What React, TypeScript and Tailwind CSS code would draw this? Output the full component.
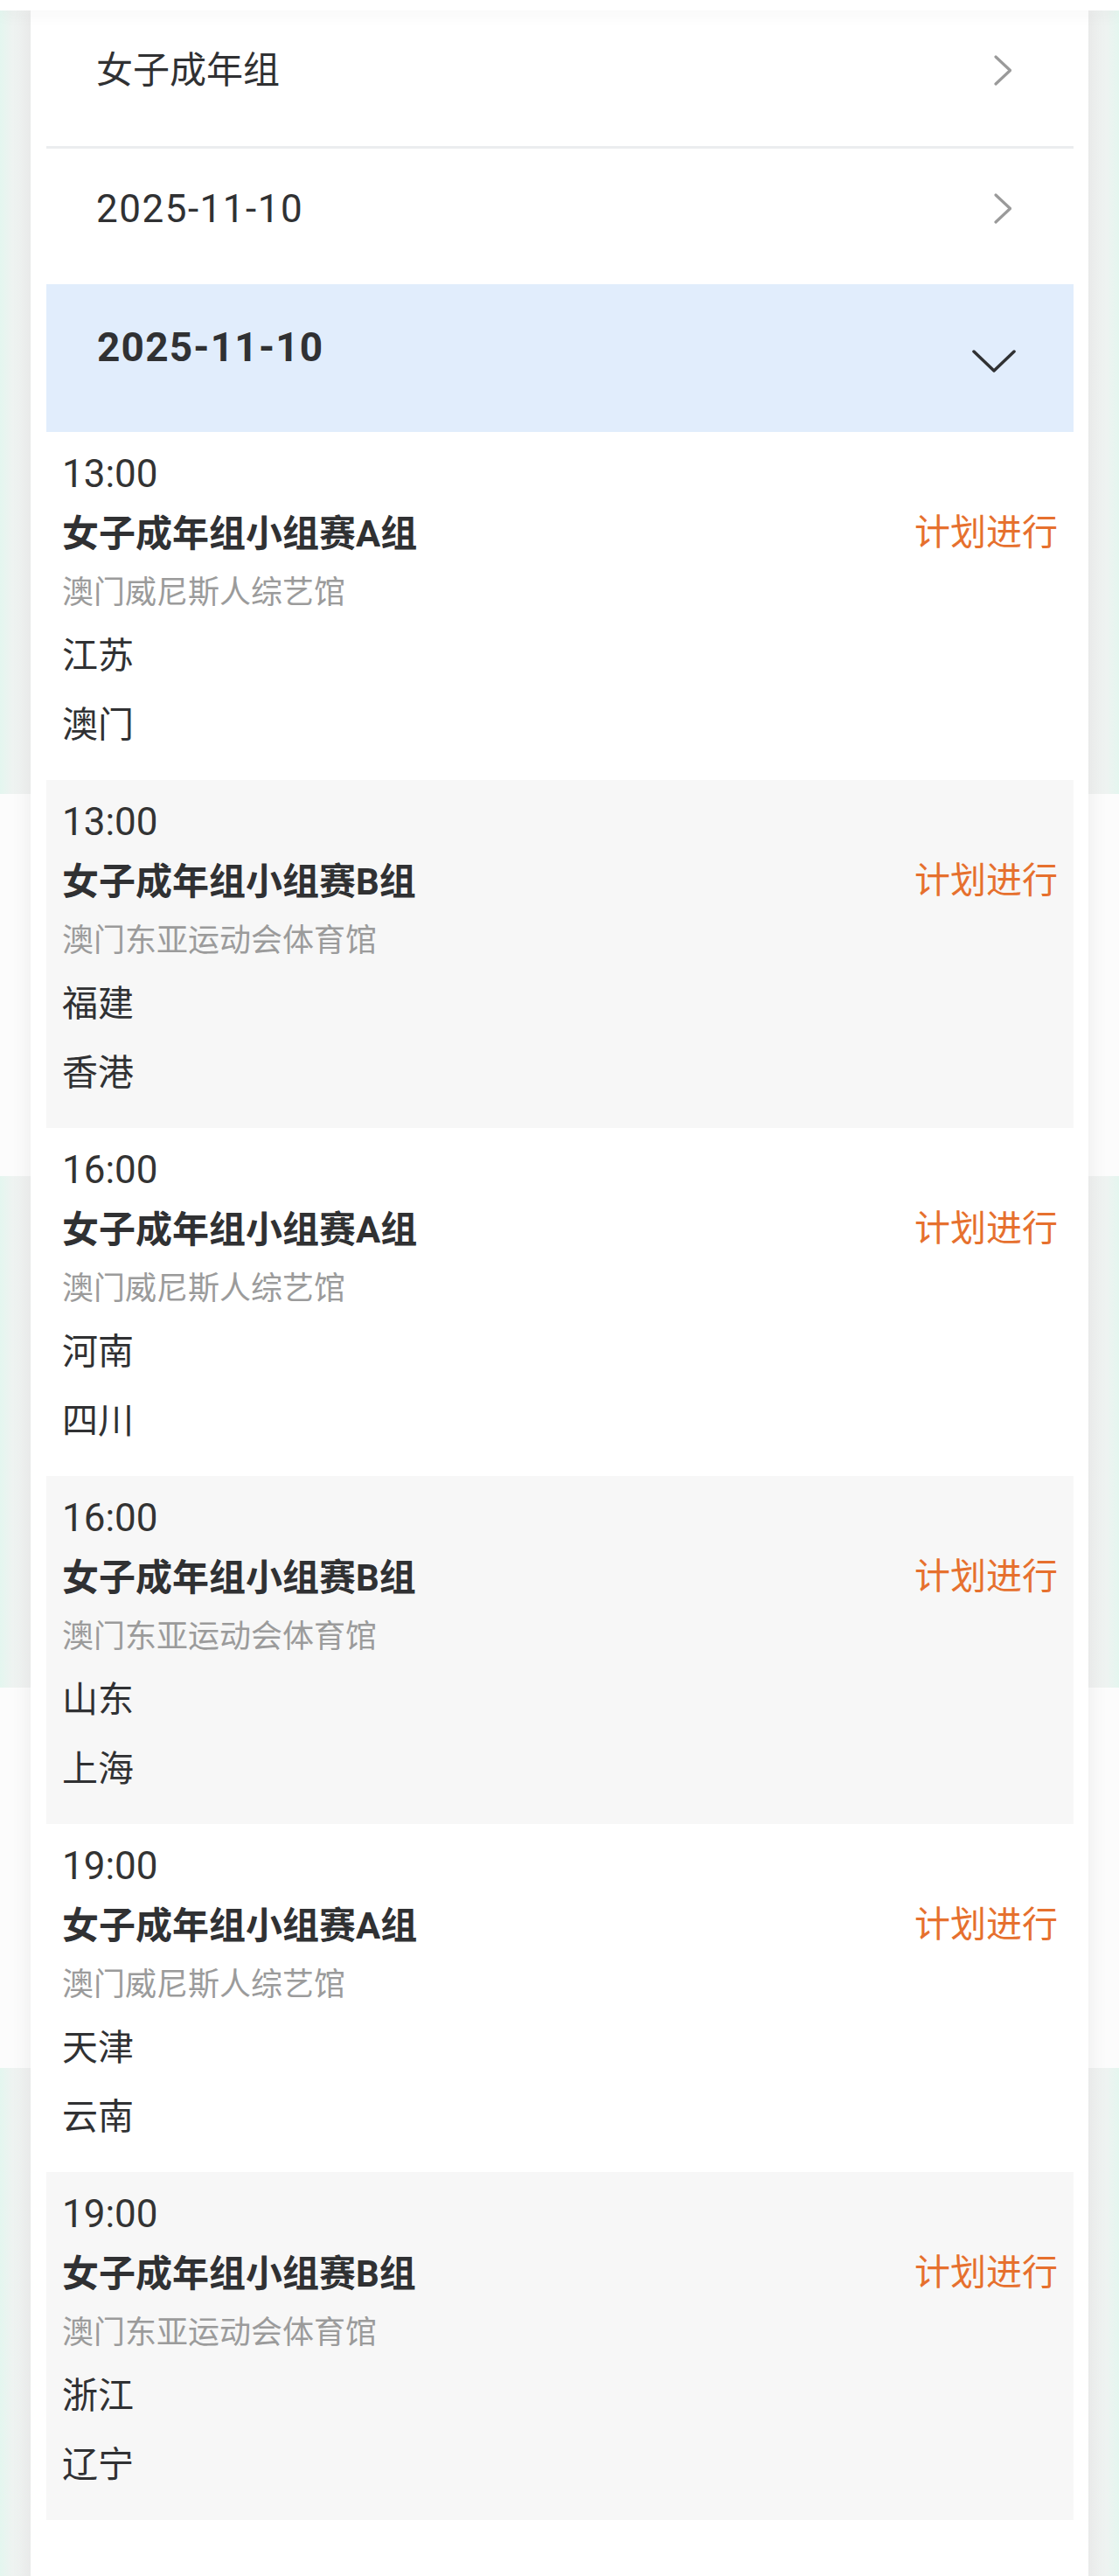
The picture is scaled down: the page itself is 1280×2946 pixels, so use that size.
import React from 'react'

interface Match {
  time: string
  title: string
  venue: string
  home: string
  away: string
  status: string
}

const matches: Match[] = [
  { time: '13:00', title: '女子成年组小组赛A组', venue: '澳门威尼斯人综艺馆', home: '江苏', away: '澳门', status: '计划进行' },
  { time: '13:00', title: '女子成年组小组赛B组', venue: '澳门东亚运动会体育馆', home: '福建', away: '香港', status: '计划进行' },
  { time: '16:00', title: '女子成年组小组赛A组', venue: '澳门威尼斯人综艺馆', home: '河南', away: '四川', status: '计划进行' },
  { time: '16:00', title: '女子成年组小组赛B组', venue: '澳门东亚运动会体育馆', home: '山东', away: '上海', status: '计划进行' },
  { time: '19:00', title: '女子成年组小组赛A组', venue: '澳门威尼斯人综艺馆', home: '天津', away: '云南', status: '计划进行' },
  { time: '19:00', title: '女子成年组小组赛B组', venue: '澳门东亚运动会体育馆', home: '浙江', away: '辽宁', status: '计划进行' },
]

function ChevronRight() {
  return (
    <svg width="20" height="35" viewBox="0 0 20 35" fill="none" className="shrink-0">
      <polyline points="2,2 18.5,17.5 2,33" stroke="#9a9a9a" strokeWidth="3.2" strokeLinecap="round" strokeLinejoin="round" />
    </svg>
  )
}

function ChevronDown() {
  return (
    <svg width="50" height="26" viewBox="0 0 50 26" fill="none" className="shrink-0">
      <polyline points="2,2 25,24 48,2" stroke="#303133" strokeWidth="3.5" strokeLinecap="round" strokeLinejoin="round" />
    </svg>
  )
}

function MatchRow({ m, odd }: { m: Match; odd: boolean }) {
  return (
    <div className={`h-[398px] pl-[18px] pr-[18px] pt-[16px] ${odd ? 'bg-[#f7f7f7]' : 'bg-white'}`}>
      <div className="text-[44px] leading-[64px] text-[#333]">{m.time}</div>
      <div className="flex h-[72px] items-center justify-between">
        <span className="text-[42px] font-bold text-[#303133]">{m.title}</span>
        <span className="text-[41px] text-[#e6702e]">{m.status}</span>
      </div>
      <div className="text-[36px] leading-[64px] text-[#9b9b9b]">{m.venue}</div>
      <div className="text-[41px] leading-[80px] text-[#303133]">{m.home}</div>
      <div className="text-[41px] leading-[78px] text-[#303133]">{m.away}</div>
    </div>
  )
}

export default function App() {
  return (
    <div className="relative h-[2946px] overflow-hidden bg-white font-['Roboto','Noto_Sans_CJK_SC',sans-serif]">
      {/* page behind the sheet */}
      <div className="absolute inset-0 flex flex-col">
        <div className="h-[908px] bg-[linear-gradient(to_right,#e4f6ef_0px,#eef3f1_14px,#f2f2f2_40px,#f2f2f2_calc(100%-40px),#eef3f1_calc(100%-14px),#e4f6ef_100%)]" />
        <div className="h-[437px] bg-[#fcfcfc]" />
        <div className="h-[585px] bg-[linear-gradient(to_right,#e4f6ef_0px,#eef3f1_14px,#f2f2f2_40px,#f2f2f2_calc(100%-40px),#eef3f1_calc(100%-14px),#e4f6ef_100%)]" />
        <div className="h-[435px] bg-[#fcfcfc]" />
        <div className="flex-1 bg-[linear-gradient(to_right,#e4f6ef_0px,#eef3f1_14px,#f2f2f2_40px,#f2f2f2_calc(100%-40px),#eef3f1_calc(100%-14px),#e4f6ef_100%)]" />
      </div>

      <div className="relative flex h-full flex-col">
        <div className="relative z-10 h-[12px] shrink-0 bg-white shadow-[0_6px_18px_rgba(0,0,0,0.04)]" />

        <div className="mx-[35px] flex-1 bg-white px-[18px] pr-[17px] pb-[120px] shadow-[0_0_20px_3px_rgba(0,0,0,0.06)]">
          <div className="flex h-[155px] items-start justify-between pl-[57px] pr-[71px] pt-[37px]">
            <span className="text-[42px] leading-[64px] text-[#303133]">女子成年组</span>
            <div className="pt-[14px]">
              <ChevronRight />
            </div>
          </div>
          <div className="h-[3px] bg-[#ebedef]" />
          <div className="flex h-[155px] items-start justify-between pl-[57px] pr-[71px] pt-[37px]">
            <span className="text-[44px] leading-[64px] tracking-[1.5px] text-[#303133]">2025-11-10</span>
            <div className="pt-[14px]">
              <ChevronRight />
            </div>
          </div>

          <div className="flex h-[169px] items-start justify-between bg-[#e1edfc] pl-[58px] pr-[66px] pt-[40px]">
            <span className="text-[46px] font-bold leading-[64px] tracking-[1.2px] text-[#303133]">2025-11-10</span>
            <div className="pt-[35px]">
              <ChevronDown />
            </div>
          </div>

          {matches.map((m, i) => (
            <MatchRow key={i} m={m} odd={i % 2 === 1} />
          ))}
        </div>
      </div>
    </div>
  )
}
